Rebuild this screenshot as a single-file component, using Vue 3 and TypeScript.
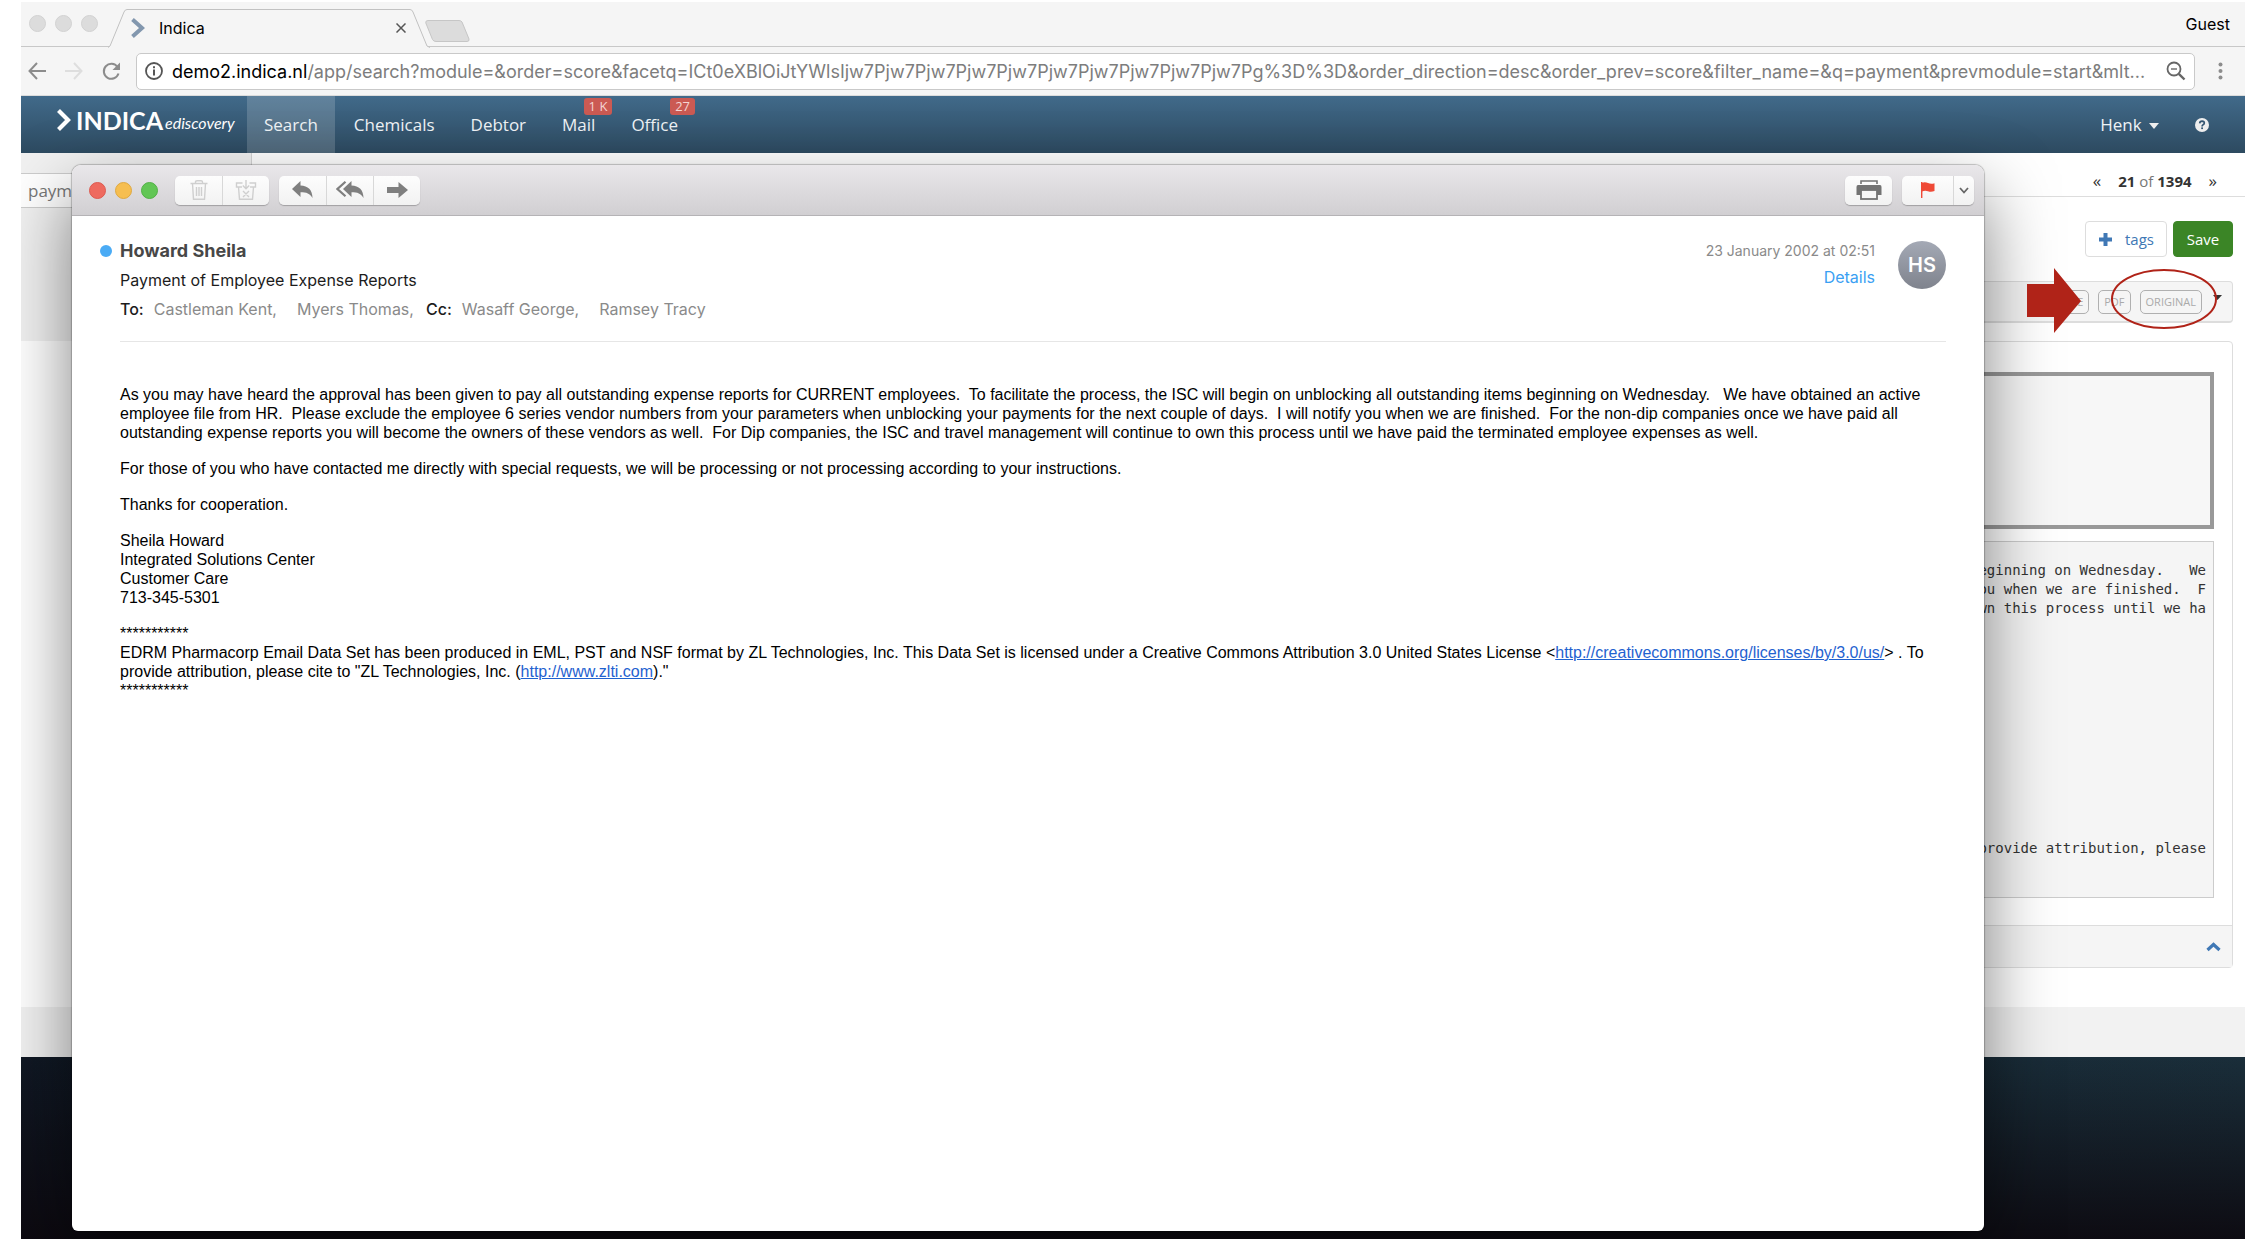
<script setup lang="ts">
interface NavItem {
  label: string
  badge?: string
  active?: boolean
}

const navItems: NavItem[] = [
  { label: 'Search', active: true },
  { label: 'Chemicals' },
  { label: 'Debtor' },
  { label: 'Mail', badge: '1 K' },
  { label: 'Office', badge: '27' },
]

const urlHost = 'demo2.indica.nl'
const urlPath =
  '/app/search?module=&order=score&facetq=ICt0eXBlOiJtYWlsIjw7Pjw7Pjw7Pjw7Pjw7Pjw7Pjw7Pjw7Pjw7Pjw7Pg%3D%3D&order_direction=desc&order_prev=score&filter_name=&q=payment&prevmodule=start&mlt...'

const bodyText =
  'As you may have heard the approval has been given to pay all outstanding expense reports for CURRENT employees.  To facilitate the process, the ISC will begin on unblocking all outstanding items beginning on Wednesday.   We have obtained an active employee file from HR.  Please exclude the employee 6 series vendor numbers from your parameters when unblocking your payments for the next couple of days.  I will notify you when we are finished.  For the non-dip companies once we have paid all outstanding expense reports you will become the owners of these vendors as well.  For Dip companies, the ISC and travel management will continue to own this process until we have paid the terminated employee expenses as well.'

const previewText = 'beginning on Wednesday.   We\nyou when we are finished.  F\nown this process until we ha'
</script>

<template>
  <div class="browser">
    <header class="tabstrip">
      <div class="lights idle"><i></i><i></i><i></i></div>
      <div class="tab">
        <svg class="tab-shape" width="322" height="39" viewBox="0 0 322 39">
          <path d="M0 38.5 L2 37 L16 3 Q17 .5 19 .5 H302 Q304 .5 305 3 L319 37 L322 38.5" fill="#f5f5f5" stroke="#c2c2c2" />
        </svg>
        <svg class="favicon" width="14" height="20" viewBox="0 0 14 20">
          <path d="M1.5 1.5 L11 10 L1.5 18.5" fill="none" stroke="#8297ae" stroke-width="4" />
        </svg>
        <span class="tab-title">Indica</span>
        <button class="plain tab-close" aria-label="Close tab">
          <svg width="10" height="10" viewBox="0 0 10 10"><path d="M.5 .5 L9.500 9.500 M9.500 .5 L.5 9.500" stroke="#555" stroke-width="1.500" /></svg>
        </button>
      </div>
      <button class="plain newtab" aria-label="New tab">
        <svg width="45" height="22" viewBox="0 0 45 22">
          <path d="M3 .5 H34 Q36 .5 37 2 L44 19 Q44.500 21.500 42 21.500 H11 Q8.500 21.500 7.500 19.500 L.8 3 Q.3 .5 3 .5Z" fill="#dcdcdc" stroke="#c6c6c6" />
        </svg>
      </button>
      <span class="guest">Guest</span>
    </header>

    <div class="toolbar">
      <button class="plain" aria-label="Back">
        <svg width="18" height="18" viewBox="0 0 18 18" fill="none" stroke="#8c8c8c" stroke-width="2"><path d="M9 1 L1.500 9 L9 17 M1.500 9 H18" /></svg>
      </button>
      <button class="plain" aria-label="Forward">
        <svg width="18" height="18" viewBox="0 0 18 18" fill="none" stroke="#dedede" stroke-width="2"><path d="M9 1 L16.500 9 L9 17 M16.500 9 H0" /></svg>
      </button>
      <button class="plain" aria-label="Reload">
        <svg width="19" height="19" viewBox="0 0 19 19" fill="none" stroke="#8c8c8c" stroke-width="2"><path d="M15.500 5 A7.500 7.500 0 1 0 16.500 11.500" /><path d="M18 .5 V8 H10.500 Z" fill="#8c8c8c" stroke="none" /></svg>
      </button>
      <label class="omnibox">
        <svg width="18" height="18" viewBox="0 0 18 18"><circle cx="9" cy="9" r="8" fill="none" stroke="#555" stroke-width="1.800" /><path d="M9 7.500 V13.500 M9 4.200 V6.200" stroke="#555" stroke-width="2" /></svg>
        <span class="host">{{ urlHost }}</span>
        <input type="text" :value="urlPath" aria-label="Address" />
        <svg width="20" height="20" viewBox="0 0 20 20" fill="none" stroke="#666" stroke-width="1.800"><circle cx="8" cy="8" r="6.500" /><path d="M12.800 12.800 L18.500 18.500" stroke-width="2.400" /><path d="M5 8 H11" stroke-width="1.400" /></svg>
      </label>
      <button class="plain menu" aria-label="Menu">
        <svg width="5" height="18" viewBox="0 0 5 18" fill="#8c8c8c"><circle cx="2.500" cy="2.500" r="2" /><circle cx="2.500" cy="9" r="2" /><circle cx="2.500" cy="15.500" r="2" /></svg>
      </button>
    </div>

    <nav class="navbar">
      <a class="logo" href="#">
        <svg width="14" height="22" viewBox="0 0 14 22"><path d="M1.500 1.500 L11 11 L1.500 20.500" fill="none" stroke="#fff" stroke-width="4.200" /></svg>
        <span class="brand">INDICA</span><span class="sub">ediscovery</span>
      </a>
      <a v-for="item in navItems" :key="item.label" href="#" class="nav-item" :class="{ active: item.active }">
        {{ item.label }}<span v-if="item.badge" class="badge">{{ item.badge }}</span>
      </a>
      <a href="#" class="nav-item user">
        Henk
        <svg width="10" height="6" viewBox="0 0 10 6"><path d="M0 0 H10 L5 6Z" fill="#eee" /></svg>
      </a>
      <a href="#" class="help" aria-label="Help">
        <svg width="14" height="14" viewBox="0 0 14 14"><circle cx="7" cy="7" r="7" fill="#eee" /><path d="M4.700 5.300 Q4.900 3.200 7.100 3.200 Q9.300 3.300 9.300 5.100 Q9.300 6.200 8.100 6.800 Q7.100 7.300 7.100 8.500" fill="none" stroke="#355672" stroke-width="1.700" /><rect x="6.200" y="9.400" width="1.800" height="1.700" fill="#355672" /></svg>
      </a>
    </nav>

    <div class="page">
      <aside class="sidebar">
        <input type="text" value="payment" aria-label="Search query" />
      </aside>
      <main class="content">
        <div class="pager">
          <a href="#">«</a><span><b>21</b> of <b>1394</b></span><a href="#">»</a>
        </div>
        <div class="actions">
          <button class="tags">
            <svg width="15" height="15" viewBox="0 0 15 15"><path d="M7.500 1 V14 M1 7.500 H14" stroke="#4078b5" stroke-width="4" /></svg>
            tags
          </button>
          <button class="save">Save</button>
        </div>
        <div class="formats">
          <button>FILE</button>
          <button>PDF</button>
          <button>ORIGINAL</button>
          <svg width="9" height="5" viewBox="0 0 9 5"><path d="M0 0 H9 L4.500 5Z" fill="#333" /></svg>
        </div>
        <section class="panel">
          <div class="panel-body">
            <div class="metabox"></div>
            <div class="preview">
              <pre>{{ previewText }}</pre>
              <pre>provide attribution, please</pre>
            </div>
          </div>
          <div class="panel-foot">
            <button class="plain" aria-label="Collapse">
              <svg width="15" height="10" viewBox="0 0 15 10"><path d="M1.500 8 L7.500 2.500 L13.500 8" fill="none" stroke="#4078b5" stroke-width="3.200" /></svg>
            </button>
          </div>
        </section>
      </main>
    </div>
    <div class="strip"></div>
    <div class="desktop"></div>

    <article class="mail">
      <header class="titlebar">
        <div class="lights"><i class="red"></i><i class="yellow"></i><i class="green"></i></div>
        <div class="group">
          <button aria-label="Delete">
            <svg width="18" height="20" viewBox="0 0 18 20" fill="none" stroke="#cfcfcf" stroke-width="1.400"><path d="M.5 3.500 H17.500 M5.500 3.500 V2 Q5.500 .8 7 .8 H11 Q12.500 .8 12.500 2 V3.500 M2.500 3.500 L3.500 19.200 H14.500 L15.500 3.500 M6.500 7 V16 M9 7 V16 M11.500 7 V16" /></svg>
          </button>
          <button aria-label="Junk">
            <svg width="22" height="20" viewBox="0 0 22 20" fill="none" stroke="#cfcfcf" stroke-width="1.400"><path d="M7.500 3 H1.500 V7 H7 M14.500 3 H20.500 V7 H15 M3.500 7 L4.500 19.200 H17.500 L18.500 7 M11 0 V8.500 M7.800 5.500 L11 8.700 L14.200 5.500 M8 11 L14 17 M14 11 L8 17" /></svg>
          </button>
        </div>
        <div class="group">
          <button aria-label="Reply">
            <svg width="21" height="18" viewBox="0 0 21 18"><path d="M8.500 0 V4.500 C16 4.800 20.500 9 20.500 17 C18 12.500 14.500 11.300 8.500 11.300 V16 L0 8 Z" fill="#7f7f7f" /></svg>
          </button>
          <button aria-label="Reply all">
            <svg width="28" height="18" viewBox="0 0 28 18"><path d="M15.500 0 V4.500 C23 4.800 27.500 9 27.500 17 C25 12.500 21.500 11.300 15.500 11.300 V16 L7 8 Z" fill="#7f7f7f" /><path d="M9.500 .8 L1.500 8 L9.500 15.200" fill="none" stroke="#7f7f7f" stroke-width="2.200" /></svg>
          </button>
          <button aria-label="Forward">
            <svg width="21" height="16" viewBox="0 0 21 16"><path d="M0 5 H11.500 V0 L21 8 L11.500 16 V11 H0 Z" fill="#7f7f7f" /></svg>
          </button>
        </div>
        <div class="group printer">
          <button aria-label="Print">
            <svg width="26" height="20" viewBox="0 0 26 20"><path d="M5 4 V1 H21 V4" fill="none" stroke="#737373" stroke-width="1.600" /><path d="M2 5 H24 Q25.500 5 25.500 7 V15 H.5 V7 Q.5 5 2 5Z" fill="#737373" /><rect x="5" y="10" width="16" height="9" fill="#f6f6f6" stroke="#737373" stroke-width="1.800" /></svg>
          </button>
        </div>
        <div class="group flag">
          <button aria-label="Flag">
            <svg width="14" height="16" viewBox="0 0 14 16"><path d="M.7 0 V16" stroke="#ef4a37" stroke-width="1.400" /><path d="M1 .8 Q4 -.4 7 1 Q10 2.400 13.500 1.200 V9 Q10 10.500 7 9.200 Q4 8 1 9.400Z" fill="#ef4a37" /></svg>
          </button>
          <button aria-label="Flag options">
            <svg width="10" height="7" viewBox="0 0 10 7"><path d="M1 1 L5 5.500 L9 1" fill="none" stroke="#666" stroke-width="1.800" /></svg>
          </button>
        </div>
      </header>

      <div class="message">
        <header class="head">
          <div class="who">
            <h1 class="sender">Howard Sheila</h1>
            <p class="subject">Payment of Employee Expense Reports</p>
            <p class="recipients">
              <b>To:</b><span>Castleman Kent,</span><span class="next">Myers Thomas,</span>
              <b class="cc">Cc:</b><span>Wasaff George,</span><span class="next">Ramsey Tracy</span>
            </p>
          </div>
          <div class="when">
            <time datetime="2002-01-23T02:51">23 January 2002 at 02:51</time>
            <a href="#">Details</a>
          </div>
          <div class="avatar">HS</div>
        </header>
        <div class="text">
          <p>{{ bodyText }}</p>
          <p>For those of you who have contacted me directly with special requests, we will be processing or not processing according to your instructions.</p>
          <p>Thanks for cooperation.</p>
          <p>Sheila Howard<br />Integrated Solutions Center<br />Customer Care<br />713-345-5301</p>
          <p>***********<br />EDRM Pharmacorp Email Data Set has been produced in EML, PST and NSF format by ZL Technologies, Inc. This Data Set is licensed under a Creative Commons Attribution 3.0 United States License &lt;<a href="#">http://creativecommons.org/licenses/by/3.0/us/</a>&gt; . To provide attribution, please cite to "ZL Technologies, Inc. (<a href="#">http://www.zlti.com</a>)."<br />***********</p>
        </div>
      </div>
    </article>

    <svg class="callout" width="192" height="66" viewBox="0 0 192 66">
      <path d="M0 16 H27 V0 L54 33 L27 65 V49 H0Z" fill="#b02318" />
      <ellipse cx="137" cy="31" rx="52" ry="29" fill="none" stroke="#b02318" stroke-width="2" />
    </svg>
  </div>
</template>

<style>
body {
  margin: 0;
  background: #fff;
}
</style>

<style scoped>
* {
  box-sizing: border-box;
}

.browser {
  position: relative;
  margin: 2px 9px 12px 21px;
  overflow: hidden;
  background: #fff;
  font-family: "Open Sans", "Noto Sans", sans-serif;
  font-size: 16px;
}

button,
input {
  font: inherit;
}

a {
  color: inherit;
  text-decoration: none;
}

.plain {
  display: flex;
  padding: 0;
  border: 0;
  background: none;
}

/* Browser chrome */
.tabstrip {
  display: flex;
  align-items: flex-start;
  height: 45px;
  border-bottom: 1px solid #c8c8c8;
  background: #f5f5f5;
  font-family: Inter, sans-serif;
}

.lights {
  display: flex;
  gap: 9px;
}

.lights i {
  width: 17px;
  height: 17px;
  border-radius: 50%;
  border: 1px solid #d2d2d2;
  background: #dcdcdc;
}

.idle {
  margin: 13px 0 0 8px;
}

.tab {
  position: relative;
  display: flex;
  align-items: center;
  width: 322px;
  height: 38px;
  margin: 7px 0 0 10px;
  padding: 0 24px 0 23px;
}

.tab-shape {
  position: absolute;
  left: 0;
  top: 0;
}

.favicon,
.tab-title,
.tab-close {
  position: relative;
}

.tab-title {
  flex: 1;
  margin-left: 14px;
}

.newtab {
  margin: 18px 0 0 -5px;
}

.guest {
  margin: 10px 15px 0 auto;
  line-height: 24px;
}

.toolbar {
  display: flex;
  align-items: center;
  gap: 19px;
  height: 49px;
  padding: 0 22px 0 7px;
  border-bottom: 1px solid #dcdcdc;
  background: #f5f5f5;
}

.omnibox {
  display: flex;
  flex: 1;
  align-items: center;
  height: 37px;
  margin-left: -4px;
  padding: 0 8px;
  border: 1px solid #c9c9c9;
  border-radius: 5px;
  background: #fff;
  font-family: Inter, sans-serif;
  font-size: 18px;
}

.host {
  margin-left: 9px;
}

.omnibox input {
  flex: 1;
  min-width: 0;
  padding: 0;
  border: 0;
  background: none;
  color: #7d7d7d;
}

.menu {
  margin-left: 4px;
}

/* Application */
.navbar {
  display: flex;
  gap: 2px;
  height: 57px;
  padding-right: 36px;
  background: linear-gradient(#416a8a, #2d4a60);
  color: #eef2f5;
}

.logo {
  display: flex;
  align-items: flex-start;
  width: 224px;
  padding: 13px 0 0 36px;
  color: #fff;
  font-family: Lato, sans-serif;
}

.brand {
  margin-left: 5px;
  font-size: 25px;
  font-weight: 700;
  line-height: 22px;
}

.sub {
  margin-left: 2px;
  font-size: 16px;
  font-style: italic;
  line-height: 28px;
}

.nav-item {
  position: relative;
  padding: 0 17px;
  font-size: 17px;
  line-height: 57px;
}

.active {
  background: rgba(255, 255, 255, 0.17);
}

.badge {
  position: absolute;
  top: 2px;
  right: 0;
  padding: 0 5px;
  border-radius: 3px;
  background: #cb5a53;
  color: #f4d5d3;
  font-size: 13px;
  line-height: 17px;
}

.user {
  margin-left: auto;
}

.user svg {
  margin: 0 0 2px 3px;
}

.help {
  display: flex;
  align-items: center;
  margin-left: 17px;
}

.page {
  display: grid;
  grid-template-columns: 231px 1fr;
  align-items: start;
  padding-bottom: 39px;
}

.sidebar {
  height: 188px;
  padding-top: 20px;
  border-right: 1px solid #d5d5d5;
  background: #f1f1f1;
}

.sidebar input {
  width: 100%;
  height: 35px;
  padding: 0 7px;
  border: solid #ccc;
  border-width: 1px 0;
  background: #fff;
  color: #777;
  font-size: 17px;
}

.pager {
  display: flex;
  align-items: center;
  justify-content: flex-end;
  gap: 17px;
  height: 44px;
  padding: 12px 28px 0 0;
  border-bottom: 1px solid #ddd;
  color: #777;
  font-size: 15px;
}

.pager b,
.pager a {
  color: #333;
}

.pager a {
  font-size: 17px;
}

.actions {
  display: flex;
  justify-content: flex-end;
  gap: 6px;
  padding: 24px 12px;
}

.actions button {
  display: flex;
  align-items: center;
  justify-content: center;
  height: 36px;
  padding: 0 12px;
  border: 1px solid #ddd;
  border-radius: 4px;
  background: #fff;
  color: #4078b5;
  font-size: 15px;
}

.actions .tags {
  gap: 12px;
}

.actions .save {
  width: 60px;
  border-color: #3b8526;
  background: #3b8526;
  color: #fff;
}

.formats {
  display: flex;
  align-items: center;
  justify-content: flex-end;
  gap: 9px;
  height: 42px;
  margin-right: 12px;
  padding-right: 10px;
  border: 1px solid #ddd;
  border-bottom-width: 2px;
  border-radius: 4px;
  background: #f5f5f5;
}

.formats button {
  height: 24px;
  padding: 0 5px;
  border: 1px solid #b0b0b0;
  border-radius: 5px;
  background: none;
  color: #aaa;
  font-size: 11px;
}

.formats svg {
  margin: 0 0 8px 2px;
}

.panel {
  margin: 18px 12px 0 0;
  border: 1px solid #ddd;
  border-radius: 4px;
}

.panel-body {
  padding: 30px 18px 27px;
}

.metabox {
  height: 157px;
  border: 4px solid #999;
  background: #f7f7f7;
}

.preview {
  height: 357px;
  margin-top: 12px;
  padding: 19px 7px;
  border: 1px solid #ccc;
  background: #f5f5f5;
  color: #333;
}

pre {
  margin: 0 0 221px;
  font: 14px/19px "DejaVu Sans Mono", monospace;
  text-align: right;
}

.panel-foot {
  display: flex;
  align-items: center;
  justify-content: flex-end;
  height: 42px;
  padding-right: 11px;
  border-top: 1px solid #ddd;
  background: #f5f5f5;
}

.strip {
  height: 50px;
  background: #f2f2f2;
}

.desktop {
  height: 182px;
  background: linear-gradient(rgba(12, 8, 14, 0), rgba(12, 8, 14, 0.9)), linear-gradient(90deg, #101824, #1a2e3a);
}

/* Mail window */
.mail {
  position: absolute;
  top: 163px;
  right: 261px;
  bottom: 8px;
  left: 51px;
  border-radius: 9px 9px 6px 6px;
  background: #fff;
  box-shadow: 0 0 1px 1px rgba(0, 0, 0, 0.22), 0 30px 70px rgba(0, 0, 0, 0.5);
  font-family: Inter, sans-serif;
}

.titlebar {
  display: flex;
  align-items: center;
  height: 51px;
  padding: 0 10px 0 17px;
  border-bottom: 1px solid #b5b3b6;
  border-radius: 9px 9px 0 0;
  background: linear-gradient(#e9e7ea, #d1cfd2);
}

.lights .red {
  border-color: #dd5a50;
  background: #ee6a5f;
}

.lights .yellow {
  border-color: #dfa840;
  background: #f6be50;
}

.lights .green {
  border-color: #52b146;
  background: #62c655;
}

.group {
  display: flex;
  height: 29px;
  margin-left: 10px;
  border-radius: 5px;
  background: linear-gradient(#fdfdfd, #f2f2f2);
  box-shadow: 0 1px 1px rgba(0, 0, 0, 0.25);
}

.lights + .group {
  margin-left: 17px;
}

.group button {
  display: flex;
  align-items: center;
  justify-content: center;
  width: 47px;
  padding: 0;
  border: 0;
  background: none;
}

.group button + button {
  border-left: 1px solid #d8d8d8;
}

.group.printer {
  margin-left: auto;
}

.group.flag button:first-child {
  width: 51px;
}

.group.flag button:last-child {
  width: 21px;
}

.message {
  padding: 22px 38px 0 48px;
}

.head {
  display: flex;
  height: 104px;
  border-bottom: 1px solid #e6e6e6;
}

.who {
  position: relative;
  flex: 1;
}

.sender::before {
  content: "";
  position: absolute;
  top: 7px;
  left: -20px;
  width: 12px;
  height: 12px;
  border-radius: 50%;
  background: #4aabf5;
}

.sender {
  margin: 0;
  color: #474747;
  font-size: 18px;
  font-weight: 700;
  line-height: 26px;
}

.subject {
  margin: 2px 0 0;
  color: #1c1c1c;
  line-height: 28px;
}

.recipients {
  display: flex;
  margin: 0;
  color: #8a8a8a;
  line-height: 30px;
}

.recipients b {
  margin-right: 10px;
  color: #1c1c1c;
  font-weight: 500;
}

.recipients .next {
  margin-left: 20px;
}

.recipients .cc {
  margin-left: 12px;
}

.when {
  display: flex;
  flex-direction: column;
  align-items: flex-end;
  margin-right: 23px;
  color: #8a8a8a;
  line-height: 26px;
}

.when time {
  font-size: 14px;
}

.when a {
  color: #3aa0f3;
}

.avatar {
  width: 48px;
  height: 48px;
  margin-top: 3px;
  border-radius: 50%;
  background: linear-gradient(#a4a9b5, #7f838d);
  color: #fff;
  font-size: 20px;
  font-weight: 600;
  line-height: 48px;
  text-align: center;
}

.text {
  padding-top: 43px;
  color: #000;
  font-family: "Liberation Sans", Arial, sans-serif;
  line-height: 19px;
}

.text p {
  margin: 0 0 17px;
  white-space: pre-wrap;
}

.text a {
  color: #1f62d0;
  text-decoration: underline;
}

.callout {
  position: absolute;
  top: 266px;
  right: 26px;
}
</style>
